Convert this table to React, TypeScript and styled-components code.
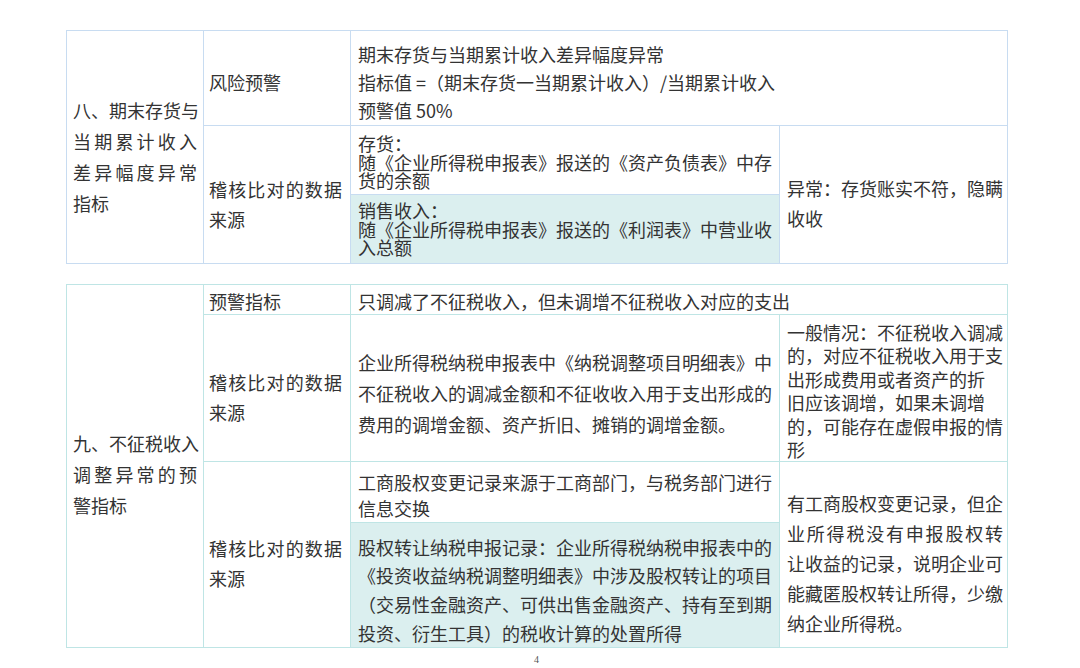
import React from "react";
import styled, { createGlobalStyle } from "styled-components";

const GlobalStyle = createGlobalStyle`
  html, body {
    margin: 0;
    padding: 0;
    background: #ffffff;
  }
  body {
    font-family: "Noto Sans CJK SC", "Noto Sans", sans-serif;
    color: #333333;
  }
`;

const Page = styled.div`
  display: flex;
  flex-direction: column;
  align-items: flex-start;
  padding: 30px 0 0 66px;
  height: 668px;
  box-sizing: border-box;
  overflow: hidden;
`;

const Sheet = styled.table<{ $line: string; $gap?: number }>`
  --line: ${(p) => p.$line};
  border-collapse: collapse;
  table-layout: fixed;
  width: 941px;
  margin-top: ${(p) => p.$gap ?? 0}px;
  font-size: 18px;
`;

const Col = styled.col<{ $w: number }>`
  width: ${(p) => p.$w}px;
`;

const Row = styled.tr<{ $h: number }>`
  height: ${(p) => p.$h}px;
`;

// left / right padding for each of the four columns
const pads: Record<number, [number, number]> = {
  1: [6, 6],
  2: [5, 8],
  3: [7, 7],
  4: [7, 4],
};

const Cell = styled.td<{ $col: 1 | 2 | 3 | 4; $lh?: number; $pt?: number; $tint?: boolean }>`
  border: 1px solid var(--line);
  vertical-align: middle;
  padding: ${(p) => p.$pt ?? 0}px ${(p) => pads[p.$col][1]}px 0
    ${(p) => pads[p.$col][0]}px;
  line-height: ${(p) => p.$lh ?? 30}px;
  background: ${(p) => (p.$tint ? "#dbefef" : "#ffffff")};
  color: #333333;
`;

const Line = styled.span<{ $fill?: boolean }>`
  display: block;
  white-space: ${(p) => (p.$fill ? "normal" : "nowrap")};
  text-align: ${(p) => (p.$fill ? "justify" : "left")};
  text-align-last: ${(p) => (p.$fill ? "justify" : "auto")};
`;

const PageNo = styled.div`
  width: 941px;
  margin-top: 6px;
  text-align: center;
  font-family: "Liberation Serif", serif;
  font-size: 10px;
  line-height: 12px;
  color: #555555;
`;

const Widths = () => (
  <colgroup>
    <Col $w={137} />
    <Col $w={147} />
    <Col $w={429} />
    <Col $w={228} />
  </colgroup>
);

export default function App() {
  return (
    <>
      <GlobalStyle />
      <Page>
        <Sheet $line="#c8dcf1">
          <Widths />
          <tbody>
            <Row $h={95}>
              <Cell $col={1} rowSpan={3} $lh={31} $pt={20}>
                <Line>八、期末存货与</Line>
                <Line $fill>当期累计收入</Line>
                <Line $fill>差异幅度异常</Line>
                <Line>指标</Line>
              </Cell>
              <Cell $col={2} $pt={8}>
                <Line>风险预警</Line>
              </Cell>
              <Cell $col={3} colSpan={2} $lh={28} $pt={8}>
                <Line>期末存货与当期累计收入差异幅度异常</Line>
                <Line>指标值 =（期末存货一当期累计收入）/当期累计收入</Line>
                <Line>预警值 50%</Line>
              </Cell>
            </Row>
            <Row $h={69}>
              <Cell $col={2} rowSpan={2} $pt={18}>
                <Line $fill>稽核比对的数据</Line>
                <Line>来源</Line>
              </Cell>
              <Cell $col={3} $lh={18.5} $pt={4}>
                <Line>存货：</Line>
                <Line>随《企业所得税申报表》报送的《资产负债表》中存</Line>
                <Line>货的余额</Line>
              </Cell>
              <Cell $col={4} rowSpan={2} $pt={16}>
                <Line>异常：存货账实不符，隐瞒</Line>
                <Line>收收</Line>
              </Cell>
            </Row>
            <Row $h={69}>
              <Cell $col={3} $lh={18.5} $tint>
                <Line>销售收入：</Line>
                <Line>随《企业所得税申报表》报送的《利润表》中营业收</Line>
                <Line>入总额</Line>
              </Cell>
            </Row>
          </tbody>
        </Sheet>

        <Sheet $line="#bfe5e5" $gap={20}>
          <Widths />
          <tbody>
            <Row $h={30}>
              <Cell $col={1} rowSpan={4} $lh={31} $pt={16}>
                <Line>九、不征税收入</Line>
                <Line $fill>调整异常的预</Line>
                <Line>警指标</Line>
              </Cell>
              <Cell $col={2} $lh={25} $pt={3}>
                <Line>预警指标</Line>
              </Cell>
              <Cell $col={3} colSpan={2} $lh={25} $pt={3}>
                <Line>只调减了不征税收入，但未调增不征税收入对应的支出</Line>
              </Cell>
            </Row>
            <Row $h={147}>
              <Cell $col={2} $pt={17}>
                <Line $fill>稽核比对的数据</Line>
                <Line>来源</Line>
              </Cell>
              <Cell $col={3} $lh={31} $pt={11}>
                <Line>企业所得税纳税申报表中《纳税调整项目明细表》中</Line>
                <Line>不征税收入的调减金额和不征收收入用于支出形成的</Line>
                <Line>费用的调增金额、资产折旧、摊销的调增金额。</Line>
              </Cell>
              <Cell $col={4} $lh={23.4} $pt={6}>
                <Line>一般情况：不征税收入调减</Line>
                <Line>的，对应不征税收入用于支</Line>
                <Line>出形成费用或者资产的折</Line>
                <Line>旧应该调增，如果未调增</Line>
                <Line>的，可能存在虚假申报的情</Line>
                <Line>形</Line>
              </Cell>
            </Row>
            <Row $h={61}>
              <Cell $col={2} rowSpan={2} $pt={16}>
                <Line $fill>稽核比对的数据</Line>
                <Line>来源</Line>
              </Cell>
              <Cell $col={3} $lh={26.5} $pt={6}>
                <Line>工商股权变更记录来源于工商部门，与税务部门进行</Line>
                <Line>信息交换</Line>
              </Cell>
              <Cell $col={4} rowSpan={2} $pt={16}>
                <Line>有工商股权变更记录，但企</Line>
                <Line $fill>业所得税没有申报股权转</Line>
                <Line>让收益的记录，说明企业可</Line>
                <Line>能藏匿股权转让所得，少缴</Line>
                <Line>纳企业所得税。</Line>
              </Cell>
            </Row>
            <Row $h={125}>
              <Cell $col={3} $lh={28.7} $pt={9} $tint>
                <Line>股权转让纳税申报记录：企业所得税纳税申报表中的</Line>
                <Line>《投资收益纳税调整明细表》中涉及股权转让的项目</Line>
                <Line>（交易性金融资产、可供出售金融资产、持有至到期</Line>
                <Line>投资、衍生工具）的税收计算的处置所得</Line>
              </Cell>
            </Row>
          </tbody>
        </Sheet>

        <PageNo>4</PageNo>
      </Page>
    </>
  );
}
